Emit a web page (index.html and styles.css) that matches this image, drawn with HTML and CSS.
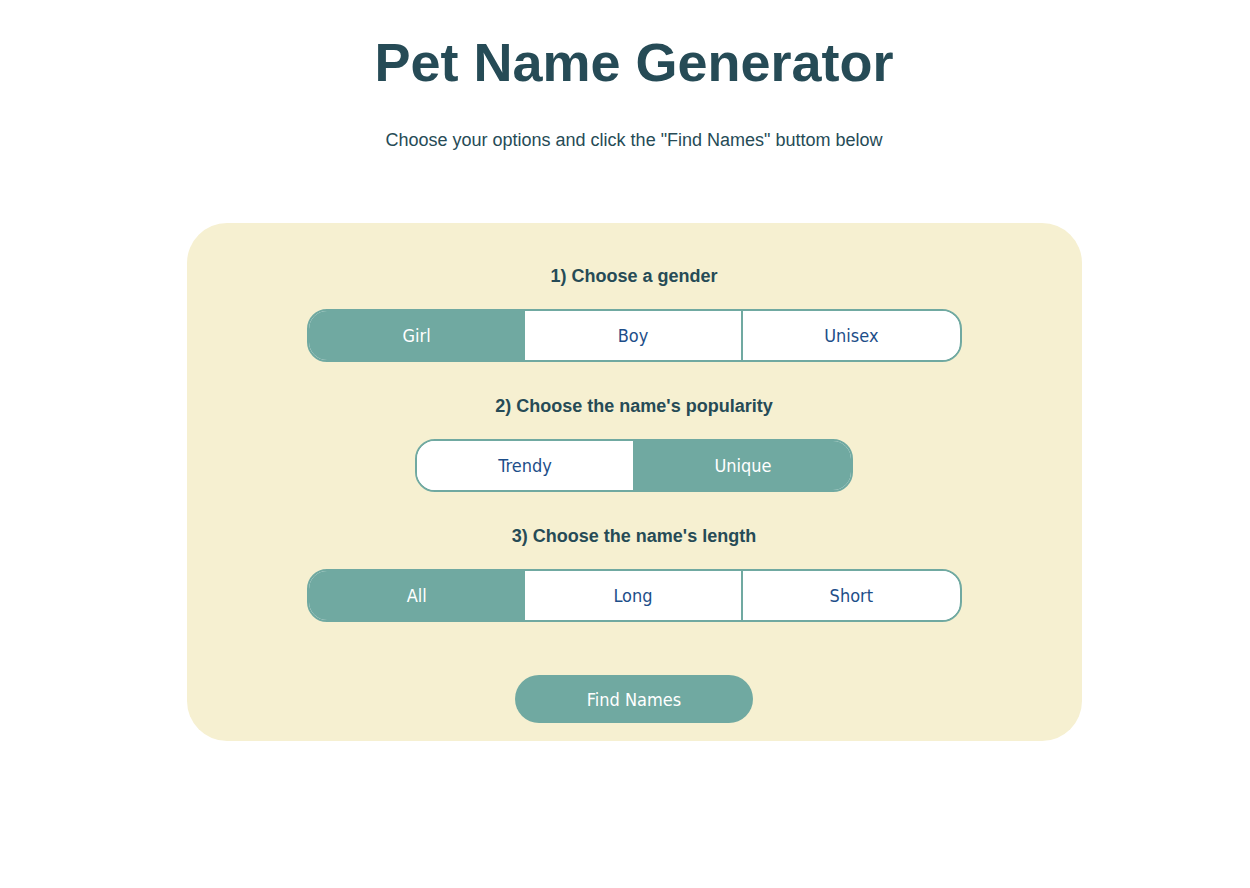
FILE: index.html
```html
<!DOCTYPE html>
<html lang="en">
<head>
<meta charset="utf-8">
<title>Pet Name Generator</title>
<link rel="stylesheet" href="styles.css">
</head>
<body>
<div class="page">
  <h1 class="title">Pet Name Generator</h1>
  <p class="subtitle">Choose your options and click the "Find Names" buttom below</p>
  <div class="card">
    <h3 class="step">1) Choose a gender</h3>
    <div class="seg seg-3">
      <button class="opt active">Girl</button>
      <button class="opt">Boy</button>
      <button class="opt">Unisex</button>
    </div>
    <h3 class="step">2) Choose the name's popularity</h3>
    <div class="seg seg-2">
      <button class="opt">Trendy</button>
      <button class="opt active">Unique</button>
    </div>
    <h3 class="step">3) Choose the name's length</h3>
    <div class="seg seg-3">
      <button class="opt active">All</button>
      <button class="opt">Long</button>
      <button class="opt">Short</button>
    </div>
    <button class="find">Find Names</button>
  </div>
</div>
</body>
</html>
```
FILE: styles.css
```css
html, body {
  margin: 0;
  padding: 0;
  background: #ffffff;
}
body {
  margin: 0 0 0 9px;
  font-family: "Liberation Sans", Arial, sans-serif;
  color: #264653;
}
.page {
  width: 1250px;
  display: flex;
  flex-direction: column;
  align-items: center;
}
.title {
  margin: 30px 0 0;
  font-size: 54px;
  line-height: 64px;
  font-weight: 700;
  color: #264b56;
}
.subtitle {
  margin: 35px 0 0;
  font-size: 18px;
  line-height: 22px;
  color: #264b56;
}
.card {
  margin-top: 72px;
  width: 895px;
  box-sizing: border-box;
  height: 518px;
  background: #f6f0d1;
  border-radius: 40px;
  display: flex;
  flex-direction: column;
  align-items: center;
  padding-top: 43px;
}
.step {
  margin: 0 0 23px;
  font-size: 18px;
  line-height: 20px;
  font-weight: 700;
  color: #264b56;
}
.seg {
  display: flex;
  border: 2px solid #70a9a1;
  border-radius: 20px;
  overflow: hidden;
  height: 53px;
  box-sizing: border-box;
  margin-bottom: 34px;
  background: #ffffff;
}
.seg-3 { width: 655px; }
.seg-2 { width: 438px; }
.opt {
  flex: 1;
  border: 0;
  margin: 0;
  padding: 0;
  background: #ffffff;
  color: #1d4e89;
  font-family: "DejaVu Sans Condensed", "DejaVu Sans", sans-serif;
  font-size: 18px;
}
.opt + .opt {
  border-left: 2px solid #70a9a1;
}
.opt.active {
  background: #70a9a1;
  color: #ffffff;
}
.opt.active + .opt {
  border-left: 0;
}
.find {
  margin-top: 19px;
  width: 238px;
  height: 48px;
  border: 0;
  border-radius: 24px;
  background: #70a9a1;
  color: #ffffff;
  font-family: "DejaVu Sans Condensed", "DejaVu Sans", sans-serif;
  font-size: 18px;
}
```
